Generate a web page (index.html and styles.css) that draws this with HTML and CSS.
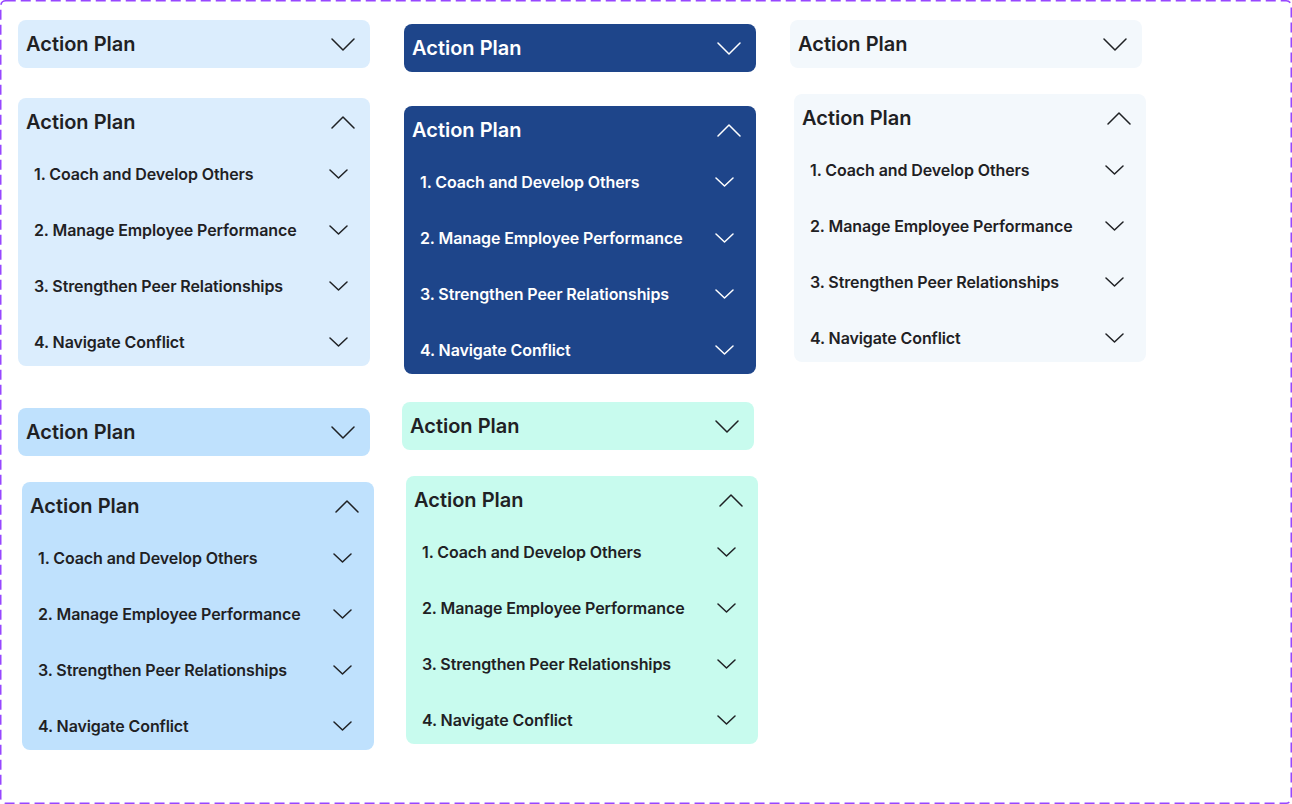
FILE: index.html
```html
<!DOCTYPE html>
<html>
<head>
<meta charset="utf-8">
<link rel="stylesheet" href="styles.css">
</head>
<body>
<div class="frame">
  <svg class="dash" viewBox="0 0 1292 804" preserveAspectRatio="none"><rect x="0.75" y="0.75" width="1290.5" height="802.5" rx="5" ry="5"/></svg>
  <div class="col col1">
    <div class="card c-light mt-a">
      <div class="head"><span class="title">Action Plan</span><svg class="chev-lg" viewBox="0 0 24 13"><path d="M1 1 L12 12 L23 1"/></svg></div>
    </div>
    <div class="card c-light mt-b">
      <div class="head"><span class="title">Action Plan</span><svg class="chev-lg" viewBox="0 0 24 13"><path d="M1 12 L12 1 L23 12"/></svg></div>
      <ul class="items">
        <li class="item"><span>1. Coach and Develop Others</span><svg class="chev-sm" viewBox="0 0 19 10"><path d="M1 1 L9.5 9 L18 1"/></svg></li>
        <li class="item"><span>2. Manage Employee Performance</span><svg class="chev-sm" viewBox="0 0 19 10"><path d="M1 1 L9.5 9 L18 1"/></svg></li>
        <li class="item"><span>3. Strengthen Peer Relationships</span><svg class="chev-sm" viewBox="0 0 19 10"><path d="M1 1 L9.5 9 L18 1"/></svg></li>
        <li class="item"><span>4. Navigate Conflict</span><svg class="chev-sm" viewBox="0 0 19 10"><path d="M1 1 L9.5 9 L18 1"/></svg></li>
      </ul>
    </div>
    <div class="card c-sky mt-c">
      <div class="head"><span class="title">Action Plan</span><svg class="chev-lg" viewBox="0 0 24 13"><path d="M1 1 L12 12 L23 1"/></svg></div>
    </div>
    <div class="card c-sky mt-d shift4">
      <div class="head"><span class="title">Action Plan</span><svg class="chev-lg" viewBox="0 0 24 13"><path d="M1 12 L12 1 L23 12"/></svg></div>
      <ul class="items">
        <li class="item"><span>1. Coach and Develop Others</span><svg class="chev-sm" viewBox="0 0 19 10"><path d="M1 1 L9.5 9 L18 1"/></svg></li>
        <li class="item"><span>2. Manage Employee Performance</span><svg class="chev-sm" viewBox="0 0 19 10"><path d="M1 1 L9.5 9 L18 1"/></svg></li>
        <li class="item"><span>3. Strengthen Peer Relationships</span><svg class="chev-sm" viewBox="0 0 19 10"><path d="M1 1 L9.5 9 L18 1"/></svg></li>
        <li class="item"><span>4. Navigate Conflict</span><svg class="chev-sm" viewBox="0 0 19 10"><path d="M1 1 L9.5 9 L18 1"/></svg></li>
      </ul>
    </div>
  </div>

  <div class="col col2">
    <div class="card c-dark mt-e shift2">
      <div class="head"><span class="title">Action Plan</span><svg class="chev-lg" viewBox="0 0 24 13"><path d="M1 1 L12 12 L23 1"/></svg></div>
    </div>
    <div class="card c-dark mt-f shift2">
      <div class="head"><span class="title">Action Plan</span><svg class="chev-lg" viewBox="0 0 24 13"><path d="M1 12 L12 1 L23 12"/></svg></div>
      <ul class="items">
        <li class="item"><span>1. Coach and Develop Others</span><svg class="chev-sm" viewBox="0 0 19 10"><path d="M1 1 L9.5 9 L18 1"/></svg></li>
        <li class="item"><span>2. Manage Employee Performance</span><svg class="chev-sm" viewBox="0 0 19 10"><path d="M1 1 L9.5 9 L18 1"/></svg></li>
        <li class="item"><span>3. Strengthen Peer Relationships</span><svg class="chev-sm" viewBox="0 0 19 10"><path d="M1 1 L9.5 9 L18 1"/></svg></li>
        <li class="item"><span>4. Navigate Conflict</span><svg class="chev-sm" viewBox="0 0 19 10"><path d="M1 1 L9.5 9 L18 1"/></svg></li>
      </ul>
    </div>
    <div class="card c-mint mt-g">
      <div class="head"><span class="title">Action Plan</span><svg class="chev-lg" viewBox="0 0 24 13"><path d="M1 1 L12 12 L23 1"/></svg></div>
    </div>
    <div class="card c-mint mt-h shift4">
      <div class="head"><span class="title">Action Plan</span><svg class="chev-lg" viewBox="0 0 24 13"><path d="M1 12 L12 1 L23 12"/></svg></div>
      <ul class="items">
        <li class="item"><span>1. Coach and Develop Others</span><svg class="chev-sm" viewBox="0 0 19 10"><path d="M1 1 L9.5 9 L18 1"/></svg></li>
        <li class="item"><span>2. Manage Employee Performance</span><svg class="chev-sm" viewBox="0 0 19 10"><path d="M1 1 L9.5 9 L18 1"/></svg></li>
        <li class="item"><span>3. Strengthen Peer Relationships</span><svg class="chev-sm" viewBox="0 0 19 10"><path d="M1 1 L9.5 9 L18 1"/></svg></li>
        <li class="item"><span>4. Navigate Conflict</span><svg class="chev-sm" viewBox="0 0 19 10"><path d="M1 1 L9.5 9 L18 1"/></svg></li>
      </ul>
    </div>
  </div>

  <div class="col col3">
    <div class="card c-pale mt-a">
      <div class="head"><span class="title">Action Plan</span><svg class="chev-lg" viewBox="0 0 24 13"><path d="M1 1 L12 12 L23 1"/></svg></div>
    </div>
    <div class="card c-pale mt-j shift4">
      <div class="head"><span class="title">Action Plan</span><svg class="chev-lg" viewBox="0 0 24 13"><path d="M1 12 L12 1 L23 12"/></svg></div>
      <ul class="items">
        <li class="item"><span>1. Coach and Develop Others</span><svg class="chev-sm" viewBox="0 0 19 10"><path d="M1 1 L9.5 9 L18 1"/></svg></li>
        <li class="item"><span>2. Manage Employee Performance</span><svg class="chev-sm" viewBox="0 0 19 10"><path d="M1 1 L9.5 9 L18 1"/></svg></li>
        <li class="item"><span>3. Strengthen Peer Relationships</span><svg class="chev-sm" viewBox="0 0 19 10"><path d="M1 1 L9.5 9 L18 1"/></svg></li>
        <li class="item"><span>4. Navigate Conflict</span><svg class="chev-sm" viewBox="0 0 19 10"><path d="M1 1 L9.5 9 L18 1"/></svg></li>
      </ul>
    </div>
  </div>
</div>
</body>
</html>
```

FILE: styles.css
```css
* { box-sizing: border-box; }
html, body { margin: 0; padding: 0; background: #ffffff; }
body {
  font-family: Inter, "Noto Sans", sans-serif;
  color: #1f2124;
}
.frame {
  position: relative;
  width: 1292px;
  height: 804px;
  padding: 1px;
  display: flex;
  align-items: flex-start;
}
.dash {
  position: absolute;
  left: 0;
  top: 0;
  width: 1292px;
  height: 804px;
  pointer-events: none;
}
.dash rect {
  fill: none;
  stroke: #9747ff;
  stroke-width: 1.5;
  stroke-dasharray: 10 5;
}
.col { display: flex; flex-direction: column; width: 356px; }
.col1 { margin-left: 17px; }
.col2 { margin-left: 28px; }
.col3 { margin-left: 32px; }

.card {
  width: 352px;
  border-radius: 8px;
}
.shift2 { margin-left: 2px; }
.shift4 { margin-left: 4px; }

.mt-a { margin-top: 19px; }
.mt-b { margin-top: 30px; }
.mt-c { margin-top: 42px; }
.mt-d { margin-top: 26px; }
.mt-e { margin-top: 23px; }
.mt-f { margin-top: 34px; }
.mt-g { margin-top: 28px; }
.mt-h { margin-top: 26px; }
.mt-j { margin-top: 26px; }

.c-light { background: #dbedfd; }
.c-sky { background: #bfe1fd; }
.c-dark { background: #1e458a; color: #ffffff; }
.c-mint { background: #c8fbee; }
.c-pale { background: #f3f8fc; }

.head {
  height: 48px;
  display: flex;
  align-items: center;
  justify-content: space-between;
  padding: 0 15px 0 8px;
}
.title {
  font-size: 20px;
  font-weight: 600;
  letter-spacing: 0;
}
.chev-lg { width: 24px; height: 13px; }
.chev-lg path, .chev-sm path {
  fill: none;
  stroke: currentColor;
  stroke-width: 1.5;
  stroke-linecap: round;
  stroke-linejoin: round;
}
.items {
  list-style: none;
  margin: 0;
  padding: 4px 0 0 0;
  display: flex;
  flex-direction: column;
  gap: 8px;
}
.item {
  height: 48px;
  display: flex;
  align-items: center;
  justify-content: space-between;
  padding: 0 22px 0 16px;
  font-size: 16px;
  font-weight: 600;
  letter-spacing: -0.1px;
}
.chev-sm { width: 19px; height: 10px; }
```
